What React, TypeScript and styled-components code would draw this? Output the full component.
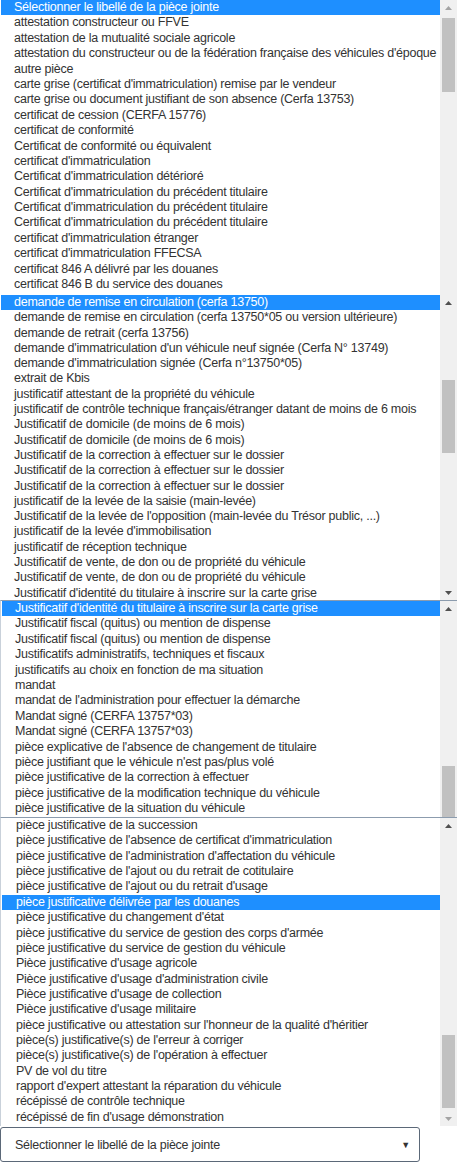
import React from "react";
import styled, { createGlobalStyle } from "styled-components";

const Global = createGlobalStyle`
  html, body { margin: 0; padding: 0; background: #ffffff; }
  body { font-family: "Liberation Sans", Arial, sans-serif; }
`;

const Page = styled.div`
  width: 457px;
  display: flex;
  flex-direction: column;
`;

const Panel = styled.div<{ $h: number; $bordered?: boolean }>`
  height: ${(p) => p.$h}px;
  display: flex;
  overflow: hidden;
  box-sizing: border-box;
  border-top: ${(p) => (p.$bordered ? "1px solid #8c9cae" : "none")};
  border-left: ${(p) => (p.$bordered ? "1px solid #c9d1da" : "none")};
  background: #ffffff;
`;

const List = styled.div`
  flex: 1;
  display: flex;
  flex-direction: column;
  min-width: 0;
`;

const Row = styled.div<{ $sel?: boolean; $rh: number; $indent: number }>`
  height: ${(p) => p.$rh}px;
  line-height: ${(p) => p.$rh}px;
  flex: none;
  padding-left: ${(p) => p.$indent}px;
  margin-left: 1px;
  font-size: 12.5px;
  letter-spacing: -0.25px;
  white-space: nowrap;
  overflow: hidden;
  color: ${(p) => (p.$sel ? "#ffffff" : "#333333")};
  background: ${(p) => (p.$sel ? "#1e8fff" : "transparent")};
`;

const Track = styled.div`
  width: 17px;
  flex: none;
  background: #f0f0f0;
  display: flex;
  flex-direction: column;
  align-items: center;
`;

const ArrowBox = styled.div<{ $auto?: boolean }>`
  width: 17px;
  height: 15px;
  flex: none;
  display: flex;
  align-items: center;
  justify-content: center;
  margin-top: ${(p) => (p.$auto ? "auto" : "0")};
`;

const Thumb = styled.div<{ $top: number; $h: number }>`
  width: 13px;
  flex: none;
  height: ${(p) => p.$h}px;
  margin-top: ${(p) => p.$top}px;
  background: #c1c1c1;
`;

const Arrow = ({ up, light }: { up?: boolean; light?: boolean }) => (
  <svg width="7" height="4" viewBox="0 0 7 4">
    <polygon
      points={up ? "0,4 7,4 3.5,0" : "0,0 7,0 3.5,4"}
      fill={light ? "#a3a3a3" : "#505050"}
    />
  </svg>
);

const SelectBox = styled.div`
  margin-top: 1px;
  width: 420px;
  height: 35px;
  box-sizing: border-box;
  border: 1px solid #5b6878;
  border-radius: 3px;
  display: flex;
  align-items: center;
  justify-content: space-between;
  padding: 0 9px 0 14px;
  font-size: 12.5px;
  letter-spacing: -0.25px;
  color: #333333;
`;

const Caret = styled.span`
  font-size: 9px;
  color: #333333;
`;

type PanelDef = {
  h: number;
  rh: number;
  indent: number;
  bordered?: boolean;
  sel: number;
  rows: string[];
  thumbTop: number;
  thumbH: number;
  upLight?: boolean;
  down?: boolean;
  downLight?: boolean;
};

const panels: PanelDef[] = [
  {
    h: 295,
    rh: 15.4,
    indent: 13,
    sel: 0,
    thumbTop: 18,
    thumbH: 74,
    upLight: true,
    rows: [
      "Sélectionner le libellé de la pièce jointe",
      "attestation constructeur ou FFVE",
      "attestation de la mutualité sociale agricole",
      "attestation du constructeur ou de la fédération française des véhicules d'époque",
      "autre pièce",
      "carte grise (certificat d'immatriculation) remise par le vendeur",
      "carte grise ou document justifiant de son absence (Cerfa 13753)",
      "certificat de cession (CERFA 15776)",
      "certificat de conformité",
      "Certificat de conformité ou équivalent",
      "certificat d'immatriculation",
      "Certificat d'immatriculation détérioré",
      "Certificat d'immatriculation du précédent titulaire",
      "Certificat d'immatriculation du précédent titulaire",
      "Certificat d'immatriculation du précédent titulaire",
      "certificat d'immatriculation étranger",
      "certificat d'immatriculation FFECSA",
      "certificat 846 A délivré par les douanes",
      "certificat 846 B du service des douanes",
    ],
  },
  {
    h: 305,
    rh: 15.3,
    indent: 13,
    sel: 0,
    thumbTop: 85,
    thumbH: 73,
    down: true,
    rows: [
      "demande de remise en circulation (cerfa 13750)",
      "demande de remise en circulation (cerfa 13750*05 ou version ultérieure)",
      "demande de retrait (cerfa 13756)",
      "demande d'immatriculation d'un véhicule neuf signée (Cerfa N° 13749)",
      "demande d'immatriculation signée (Cerfa n°13750*05)",
      "extrait de Kbis",
      "justificatif attestant de la propriété du véhicule",
      "justificatif de contrôle technique français/étranger datant de moins de 6 mois",
      "Justificatif de domicile (de moins de 6 mois)",
      "Justificatif de domicile (de moins de 6 mois)",
      "Justificatif de la correction à effectuer sur le dossier",
      "Justificatif de la correction à effectuer sur le dossier",
      "Justificatif de la correction à effectuer sur le dossier",
      "justificatif de la levée de la saisie (main-levée)",
      "Justificatif de la levée de l'opposition (main-levée du Trésor public, ...)",
      "justificatif de la levée d'immobilisation",
      "justificatif de réception technique",
      "Justificatif de vente, de don ou de propriété du véhicule",
      "Justificatif de vente, de don ou de propriété du véhicule",
      "Justificatif d'identité du titulaire à inscrire sur la carte grise",
    ],
  },
  {
    h: 217,
    rh: 15.4,
    indent: 13,
    bordered: true,
    sel: 0,
    thumbTop: 166,
    thumbH: 60,
    rows: [
      "Justificatif d'identité du titulaire à inscrire sur la carte grise",
      "Justificatif fiscal (quitus) ou mention de dispense",
      "Justificatif fiscal (quitus) ou mention de dispense",
      "Justificatifs administratifs, techniques et fiscaux",
      "justificatifs au choix en fonction de ma situation",
      "mandat",
      "mandat de l'administration pour effectuer la démarche",
      "Mandat signé (CERFA 13757*03)",
      "Mandat signé (CERFA 13757*03)",
      "pièce explicative de l'absence de changement de titulaire",
      "pièce justifiant que le véhicule n'est pas/plus volé",
      "pièce justificative de la correction à effectuer",
      "pièce justificative de la modification technique du véhicule",
      "pièce justificative de la situation du véhicule",
    ],
  },
  {
    h: 309,
    rh: 15.37,
    indent: 14,
    bordered: true,
    sel: 5,
    thumbTop: 218,
    thumbH: 73,
    down: true,
    downLight: true,
    rows: [
      "pièce justificative de la succession",
      "pièce justificative de l'absence de certificat d'immatriculation",
      "pièce justificative de l'administration d'affectation du véhicule",
      "pièce justificative de l'ajout ou du retrait de cotitulaire",
      "pièce justificative de l'ajout ou du retrait d'usage",
      "pièce justificative délivrée par les douanes",
      "pièce justificative du changement d'état",
      "pièce justificative du service de gestion des corps d'armée",
      "pièce justificative du service de gestion du véhicule",
      "Pièce justificative d'usage agricole",
      "Pièce justificative d'usage d'administration civile",
      "Pièce justificative d'usage de collection",
      "Pièce justificative d'usage militaire",
      "pièce justificative ou attestation sur l'honneur de la qualité d'héritier",
      "pièce(s) justificative(s) de l'erreur à corriger",
      "pièce(s) justificative(s) de l'opération à effectuer",
      "PV de vol du titre",
      "rapport d'expert attestant la réparation du véhicule",
      "récépissé de contrôle technique",
      "récépissé de fin d'usage démonstration",
    ],
  },
];

const ListPanel = ({ def }: { def: PanelDef }) => (
  <Panel $h={def.h} $bordered={def.bordered}>
    <List>
      {def.rows.map((r, i) => (
        <Row key={i} $sel={i === def.sel} $rh={def.rh} $indent={def.indent}>
          {r}
        </Row>
      ))}
    </List>
    <Track>
      <ArrowBox>
        <Arrow up light={def.upLight} />
      </ArrowBox>
      <Thumb $top={def.thumbTop - 15 - (def.bordered ? 1 : 0)} $h={def.thumbH} />
      {def.down && (
        <ArrowBox $auto>
          <Arrow light={def.downLight} />
        </ArrowBox>
      )}
    </Track>
  </Panel>
);

export default function App() {
  return (
    <Page>
      <Global />
      {panels.map((p, i) => (
        <ListPanel key={i} def={p} />
      ))}
      <SelectBox>
        <span>Sélectionner le libellé de la pièce jointe</span>
        <Caret>▼</Caret>
      </SelectBox>
    </Page>
  );
}
